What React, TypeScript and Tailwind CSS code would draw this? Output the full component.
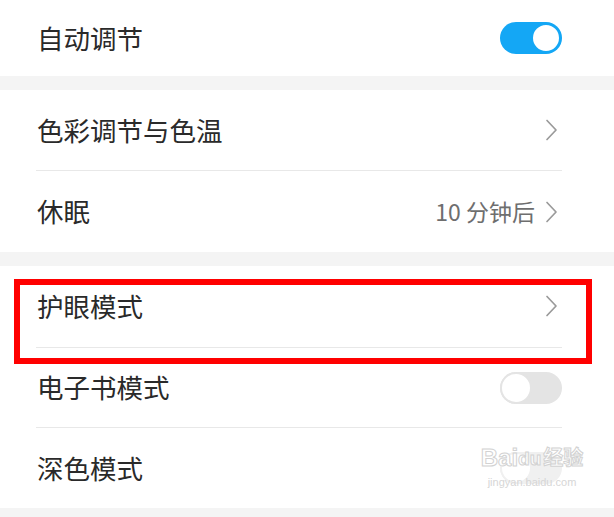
import React from "react";

const font = { fontFamily: '"Noto Sans CJK SC", "Noto Sans", sans-serif' };

function Chevron() {
  return (
    <svg width="14" height="22" viewBox="0 0 14 22" className="shrink-0">
      <path d="M3 1.5 L12 11 L3 20.5" fill="none" stroke="#9a9a9a" strokeWidth="1.7" strokeLinecap="round" strokeLinejoin="round" />
    </svg>
  );
}

function ToggleOn() {
  return (
    <div className="w-[62px] h-[32px] rounded-full bg-[#14a7f5] flex items-center justify-end p-[1px]">
      <div className="w-[30px] h-[30px] rounded-full bg-white border-[2px] border-[#14a7f5]" />
    </div>
  );
}

function ToggleOff({ faint }: { faint?: boolean }) {
  return (
    <div className={`w-[62px] h-[32px] rounded-full flex items-center justify-start ${faint ? "bg-[#f0f0f0]" : "bg-[#e4e4e4]"}`}>
      <div className={`w-[32px] h-[32px] rounded-full bg-white border-[2px] ${faint ? "border-[#f0f0f0]" : "border-[#e4e4e4]"}`} />
    </div>
  );
}

function Row({ label, right, h = "h-[80px]" }: { label: string; right: React.ReactNode; h?: string }) {
  return (
    <div className={`${h} flex items-center justify-between pl-[37px] pr-[52px]`}>
      <span className="text-[26.5px] leading-none text-[#2a2a2a]">{label}</span>
      {right}
    </div>
  );
}

function Divider() {
  return <div className="ml-[36px] mr-[52px] h-px bg-[#e8e8e8]" />;
}

function Gap({ h }: { h: string }) {
  return <div className={`${h} bg-[#f4f4f4]`} />;
}

export default function App() {
  return (
    <div className="w-[614px] h-[517px] bg-white overflow-hidden" style={font}>
      <div className="bg-white">
        <Row label="自动调节" h="h-[76px]" right={<ToggleOn />} />
      </div>
      <Gap h="h-[14px]" />
      <div className="bg-white">
        <Row label="色彩调节与色温" right={<div className="pr-[4px]"><Chevron /></div>} />
        <Divider />
        <Row
          label="休眠"
          h="h-[81px]"
          right={
            <div className="flex items-center gap-[9px] pr-[4px]">
              <span className="text-[23px] leading-none text-[#6e6e6e]">10 分钟后</span>
              <Chevron />
            </div>
          }
        />
      </div>
      <Gap h="h-[14px]" />
      <div className="bg-white relative">
        <Row label="护眼模式" h="h-[81px]" right={<div className="pr-[4px] -mt-[2px]"><Chevron /></div>} />
        <Divider />
        <Row label="电子书模式" h="h-[79px]" right={<ToggleOff />} />
        <Divider />
        <Row label="深色模式" right={<ToggleOff faint />} />
        <div className="absolute left-[14px] top-[13px] w-[578px] h-[85px] border-[6px] border-[#ff0000]" />
        <div className="absolute left-[478px] top-[180px] w-[108px] flex flex-col items-center pointer-events-none">
          <div
            className="flex items-center leading-none font-bold"
            style={{ fontFamily: '"Liberation Sans", "Noto Sans CJK SC", sans-serif', WebkitTextStroke: "1px #d2d2d2", color: "rgba(255,255,255,0.85)" }}
          >
            <span className="text-[24px]">Bai</span>
            <span className="text-[19px]">du</span>
            <span className="text-[20px] ml-[2px]">经验</span>
          </div>
          <div className="text-[11px] leading-none mt-[7px] text-[#d6d6d6]" style={{ fontFamily: '"Liberation Sans", sans-serif' }}>
            jingyan.baidu.com
          </div>
        </div>
      </div>
      <Gap h="h-[9px]" />
    </div>
  );
}
